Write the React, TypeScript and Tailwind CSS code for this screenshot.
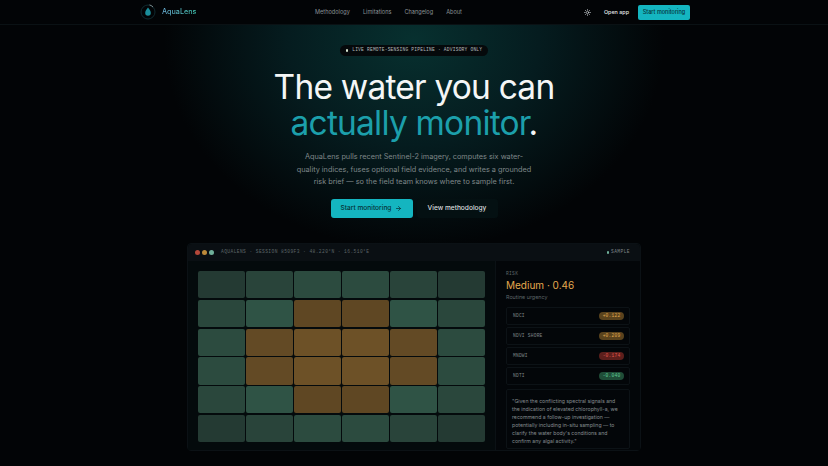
import React from 'react';
import { Sun, ArrowRight } from 'lucide-react';

const links = ['Methodology', 'Limitations', 'Changelog', 'About'];

// heatmap colours, row by row
const cells = [
  ['bg-[#243a33]', 'bg-[#29443a]', 'bg-[#2c4b3f]', 'bg-[#2c4b3f]', 'bg-[#29443a]', 'bg-[#243a33]'],
  ['bg-[#2a473c]', 'bg-[#2f5345]', 'bg-[#5f4723]', 'bg-[#5f4723]', 'bg-[#2f5345]', 'bg-[#2a473c]'],
  ['bg-[#2c4b3f]', 'bg-[#634a25]', 'bg-[#6d5127]', 'bg-[#6d5127]', 'bg-[#634a25]', 'bg-[#2c4b3f]'],
  ['bg-[#2c4b3f]', 'bg-[#634a25]', 'bg-[#6d5127]', 'bg-[#6d5127]', 'bg-[#634a25]', 'bg-[#2c4b3f]'],
  ['bg-[#2a473c]', 'bg-[#2f5345]', 'bg-[#5f4723]', 'bg-[#5f4723]', 'bg-[#2f5345]', 'bg-[#2a473c]'],
  ['bg-[#243a33]', 'bg-[#29443a]', 'bg-[#2c4b3f]', 'bg-[#2c4b3f]', 'bg-[#29443a]', 'bg-[#243a33]'],
];

const indices = [
  { name: 'NDCI', value: '+0.122', pill: 'bg-[#5a431d] text-[#e0a94f]' },
  { name: 'NDVI SHORE', value: '+0.209', pill: 'bg-[#5a431d] text-[#e0a94f]' },
  { name: 'MNDWI', value: '-0.174', pill: 'bg-[#5c1f1c] text-[#e2574c]' },
  { name: 'NDTI', value: '-0.040', pill: 'bg-[#1f4d38] text-[#5fce96]' },
];

function Logo() {
  return (
    <svg width="16" height="16" viewBox="0 0 16 16" fill="none">
      <circle cx="8" cy="8" r="7" stroke="#12343a" strokeWidth="0.8" />
      <path d="M9.5 0.9 A7 7 0 0 1 13 3" stroke="#9aa7aa" strokeWidth="0.8" />
      <path d="M8 3.6 C9.6 5.8 10.8 7.2 10.8 9 A2.8 2.8 0 0 1 5.2 9 C5.2 7.2 6.4 5.8 8 3.6 Z" fill="#1b8f9c" />
    </svg>
  );
}

export default function App() {
  return (
    <div className="h-[466px] w-[828px] overflow-hidden bg-[#020406] bg-[radial-gradient(ellipse_250px_210px_at_414px_40px,#07302f_0%,#051c1f_50%,#020406_100%)] font-['Inter',sans-serif]">
      {/* Nav */}
      <nav className="flex h-[25px] items-center border-b border-[#0a1114] bg-[#020406] pl-[140px] pr-[138px]">
        <div className="flex w-[175px] items-center gap-[6px]">
          <Logo />
          <span className="bg-gradient-to-r from-[#6ab0d8] to-[#3fc4b0] bg-clip-text text-[7.2px] font-medium text-transparent">AquaLens</span>
        </div>
        <div className="flex items-center gap-[13px] text-[5.6px] text-[#8b9396]">
          {links.map((l) => (
            <span key={l}>{l}</span>
          ))}
        </div>
        <div className="ml-auto flex items-center">
          <Sun size={7} strokeWidth={2.5} className="mr-[12.5px] text-[#c9cfd1]" />
          <span className="mr-[9px] text-[5.4px] font-medium text-[#e6e9ea]">Open app</span>
          <button className="h-[15px] w-[52px] rounded-[2px] bg-[#14b5c0] text-[5.5px] font-medium text-[#063238]">
            Start monitoring
          </button>
        </div>
      </nav>

      {/* Hero */}
      <section className="flex flex-col items-center pt-[20px]">
        <div className="flex h-[11px] w-[148px] items-center justify-center gap-[4px] rounded-full bg-[#05090b] font-['Liberation_Mono',monospace] text-[4.6px] tracking-[0.2px] text-[#b4babc]">
          <span className="h-[2.5px] w-[2.5px] rounded-full bg-[#d7e6d0]" />
          LIVE REMOTE-SENSING PIPELINE · ADVISORY ONLY
        </div>
        <h1 className="mt-[13px] text-center text-[33.5px] font-normal leading-[36px] tracking-[-0.8px] text-[#f4f6f6]">
          The water you can
          <br />
          <span className="text-[#1c9fab]">actually monitor</span>.
        </h1>
        <p className="mt-[10px] w-[240px] text-center text-[7.3px] leading-[12.5px] text-[#7f8789]">
          AquaLens pulls recent Sentinel-2 imagery, computes six water-quality indices, fuses optional field evidence, and writes a grounded risk brief — so the field team knows where to sample first.
        </p>
        <div className="mt-[10.5px] flex items-center gap-[4px]">
          <button className="flex h-[19px] w-[82px] items-center justify-center gap-[4px] rounded-[3px] bg-[#14b5c0] text-[6.6px] font-medium text-[#063238]">
            Start monitoring
            <ArrowRight size={7} strokeWidth={2.5} />
          </button>
          <button className="h-[19px] w-[81px] rounded-[3px] bg-[#041012] text-[6.6px] font-medium text-[#d9dddf]">
            View methodology
          </button>
        </div>
      </section>

      {/* Dashboard preview */}
      <div className="mx-auto mt-[25px] w-[454px] rounded-[4px] border border-[#0b1115] bg-[#04080b]">
        <div className="flex h-[17px] items-center justify-between rounded-t-[4px] bg-[#0a0f13] pl-[7px] pr-[10px] font-['Liberation_Mono',monospace] text-[4.6px] tracking-[0.4px] text-[#5d6568]">
          <div className="flex items-center">
            <span className="h-[5px] w-[5px] rounded-full bg-[#b5483a]" />
            <span className="ml-[2px] h-[5px] w-[5px] rounded-full bg-[#bd8a3a]" />
            <span className="ml-[2px] h-[5px] w-[5px] rounded-full bg-[#6fb09a]" />
            <span className="ml-[7px]">AQUALENS · SESSION 8509F3 · 48.220°N · 16.510°E</span>
          </div>
          <div className="flex items-center gap-[2px] text-[#7d8588]">
            <span className="h-[2.5px] w-[2.5px] rounded-full bg-[#6fb09a]" />
            SAMPLE
          </div>
        </div>
        <div className="flex h-[189px]">
          <div className="w-[307px] bg-[#040a0c] px-[10px] pt-[10px]">
            <div className="grid grid-cols-6 gap-[1.5px]">
              {cells.flat().map((c, i) => (
                <div key={i} className={`h-[27.3px] rounded-[2px] ${c}`} />
              ))}
            </div>
          </div>
          <div className="flex-1 border-l border-[#0b1115] bg-[#030609] px-[10px] pt-[10px]">
            <div className="font-['Liberation_Mono',monospace] text-[4.6px] leading-[6px] tracking-[0.3px] text-[#5d6568]">RISK</div>
            <div className="mt-[1px] text-[10px] leading-[14px] text-[#e3a94e]">Medium · 0.46</div>
            <div className="mt-[1px] text-[5.4px] leading-[8px] text-[#5d6568]">Routine urgency</div>
            <div className="mt-[6px] flex flex-col gap-[2px]">
              {indices.map((r) => (
                <div key={r.name} className="flex h-[18px] items-center justify-between rounded-[2px] border border-[#0c1216] pl-[6px] pr-[5px] font-['Liberation_Mono',monospace] text-[4.6px] tracking-[0.2px] text-[#7d8588]">
                  {r.name}
                  <span className={`flex h-[8px] w-[25px] items-center justify-center rounded-full ${r.pill}`}>{r.value}</span>
                </div>
              ))}
            </div>
            <div className="mt-[4px] rounded-[2px] border border-[#0c1216] px-[5px] pb-[3px] pt-[7px] text-[5.2px] leading-[8px] text-[#858c8f]">
              "Given the conflicting spectral signals and the indication of elevated chlorophyll-a, we recommend a follow-up investigation — potentially including in-situ sampling — to clarify the water body's conditions and confirm any algal activity."
            </div>
          </div>
        </div>
      </div>
    </div>
  );
}
